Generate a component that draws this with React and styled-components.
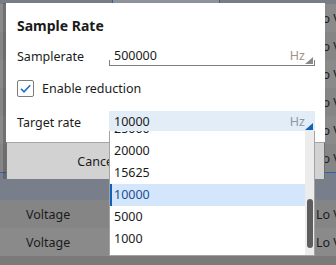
import React from "react";
import styled, { createGlobalStyle } from "styled-components";

const rates = ["50000", "25000", "20000", "15625", "10000", "5000", "1000", "500"];

const GlobalStyle = createGlobalStyle`
    body {
        margin: 0;
        font-family: "Noto Sans", "Open Sans", sans-serif;
        color: #1b1b1b;
    }
`;

const Page = styled.div`
    position: relative;
    width: 336px;
    height: 265px;
    overflow: hidden;
    background: #7a7a7a;
`;

const TopBar = styled.div`
    height: 4px;
    background: #787d88;
    padding-left: 112px;
`;

const TopTab = styled.div`
    width: 106px;
    height: 3px;
    border: 1px solid #2b5fa3;
    border-top: none;
    background: #8d929c;
`;

const Row = styled.div`
    display: flex;
    align-items: center;
    height: 28px;
    box-sizing: border-box;
    padding-left: 26px;
    font-size: 12.5px;
    background: ${(p) => (p.$selected ? "#787e8a" : p.$odd ? "#858585" : "#8a8a8a")};
    border-top: ${(p) => (p.$selected ? "1px solid #2b63b0" : "none")};
`;

const RowValue = styled.span`
    margin-left: auto;
    width: 20px;
    overflow: hidden;
    white-space: nowrap;
`;

const Dialog = styled.div`
    position: absolute;
    left: 6px;
    top: 3px;
    width: 319px;
    height: 176px;
    display: flex;
    flex-direction: column;
    box-shadow: -3px 0 0 rgba(0, 0, 0, 0.18);
`;

const Body = styled.div`
    flex: 1;
    background: #fff;
    padding: 13px 10px 0 11px;
`;

const Title = styled.h2`
    margin: 0;
    font-size: 14px;
    line-height: 20px;
    font-weight: 700;
`;

const Field = styled.div`
    display: grid;
    grid-template-columns: 92px 206px;
    align-items: center;
    margin-top: ${(p) => p.$gap}px;
    font-size: 12.5px;
`;

const Input = styled.div`
    position: relative;
    display: flex;
    align-items: center;
    box-sizing: border-box;
    height: ${(p) => (p.$active ? 22 : 20)}px;
    padding: 0 10px 0 5px;
    background: ${(p) => (p.$active ? "#e3edf8" : "#fff")};
    border-bottom: ${(p) => (p.$active ? "2px solid #1160b7" : "1px solid #808080")};

    &::before,
    &::after {
        content: "";
        position: absolute;
        bottom: 0;
        width: 1px;
        height: 5px;
        background: ${(p) => (p.$active ? "transparent" : "#808080")};
    }
    &::before {
        left: 0;
    }
    &::after {
        right: 0;
    }
`;

const Unit = styled.span`
    margin-left: auto;
    color: ${(p) => (p.$active ? "#8d96a4" : "#a29286")};
`;

const Corner = styled.span`
    position: absolute;
    right: 2px;
    bottom: 1px;
    width: 0;
    height: 0;
    border-left: 8px solid transparent;
    border-bottom: 7px solid ${(p) => (p.$active ? "#1160b7" : "#8a8a8a")};
`;

const CheckRow = styled.label`
    display: flex;
    align-items: center;
    gap: 8px;
    margin-top: 13px;
    height: 18px;
    font-size: 12.5px;
`;

const Box = styled.span`
    display: flex;
    align-items: center;
    justify-content: center;
    width: 15px;
    height: 15px;
    border: 1px solid #7c7c7c;
    border-radius: 2px;
    background: #fff;
`;

const Dropdown = styled.div`
    position: absolute;
    left: 0;
    top: 100%;
    width: 206px;
    height: 125px;
    box-sizing: border-box;
    border: 1px solid #a3a3a3;
    border-top: none;
    background: #fff;
    overflow: hidden;
    z-index: 2;
`;

const Items = styled.div`
    margin-top: ${(p) => -p.$offset}px;
    margin-right: 9px;
`;

const Item = styled.div`
    height: 22px;
    line-height: 22px;
    font-size: 12.5px;
    background: ${(p) => (p.$selected ? "#d4e6fb" : "#fff")};
    color: ${(p) => (p.$selected ? "#1d4f93" : "#1b1b1b")};
    box-shadow: ${(p) => (p.$selected ? "inset 3px 0 0 #1160b7" : "none")};
    margin-left: ${(p) => (p.$selected ? -1 : 0)}px;
    padding-left: ${(p) => (p.$selected ? 5 : 4)}px;
`;

const Track = styled.div`
    position: absolute;
    top: 0;
    right: 0;
    bottom: 0;
    width: 9px;
    background: #ececec;
`;

const Thumb = styled.div`
    position: absolute;
    left: 2px;
    width: 6px;
    height: 49px;
    border-radius: 3px;
    background: #5d5d5d;
`;

const Footer = styled.div`
    height: 37px;
    box-sizing: border-box;
    display: grid;
    grid-template-columns: 1fr 1fr;
    align-items: center;
    padding-left: 14px;
    background: #d2d2d2;
    border-top: 1px solid #a6a6a6;
    border-left: 1px solid #6f6f6f;
    border-right: 1px solid #6f6f6f;
    font-size: 12.5px;
`;

const Button = styled.button`
    font: inherit;
    color: #1b1b1b;
    background: none;
    border: none;
    padding: 0;
    text-align: center;
`;

const backRows = [
    { label: "Voltage", value: "Lo V" },
    { label: "Voltage", value: "Lo V" },
    { label: "Voltage", value: "Lo V" },
    { label: "Voltage", value: "Lo V" },
    { label: "Voltage", value: "Lo V" },
    { label: "Voltage", value: "Lo V" },
    { label: "", value: "", selected: true },
    { label: "Voltage", value: "Lo V" },
    { label: "Voltage", value: "Lo V" },
];

const App = () => {
    const selected = "10000";

    return (
        <Page>
            <GlobalStyle />

            {/* App behind the dialog */}
            <TopBar>
                <TopTab />
            </TopBar>
            {backRows.map((row, i) => (
                <Row key={i} $odd={i % 2 === 1} $selected={row.selected}>
                    <span>{row.label}</span>
                    <RowValue>{row.value}</RowValue>
                </Row>
            ))}

            {/* Dialog */}
            <Dialog>
                <Body>
                    <Title>Sample Rate</Title>

                    <Field $gap={10}>
                        <span>Samplerate</span>
                        <Input>
                            500000
                            <Unit>Hz</Unit>
                            <Corner />
                        </Input>
                    </Field>

                    <CheckRow>
                        <Box>
                            <svg width="13" height="13" viewBox="0 0 13 13">
                                <path
                                    d="M2 6.8 L5 9.8 L11.2 3.2"
                                    fill="none"
                                    stroke="#1a6fc8"
                                    strokeWidth="1.6"
                                />
                            </svg>
                        </Box>
                        Enable reduction
                    </CheckRow>

                    <Field $gap={14}>
                        <span>Target rate</span>
                        <Input $active>
                            {selected}
                            <Unit $active>Hz</Unit>
                            <Corner $active />
                            <Dropdown>
                                <Items $offset={35}>
                                    {rates.map((rate) => (
                                        <Item key={rate} $selected={rate === selected}>
                                            {rate}
                                        </Item>
                                    ))}
                                </Items>
                                <Track>
                                    <Thumb style={{ top: 68 }} />
                                </Track>
                            </Dropdown>
                        </Input>
                    </Field>
                </Body>
                <Footer>
                    <Button>Cancel</Button>
                    <Button>OK</Button>
                </Footer>
            </Dialog>
        </Page>
    );
};

export default App;
